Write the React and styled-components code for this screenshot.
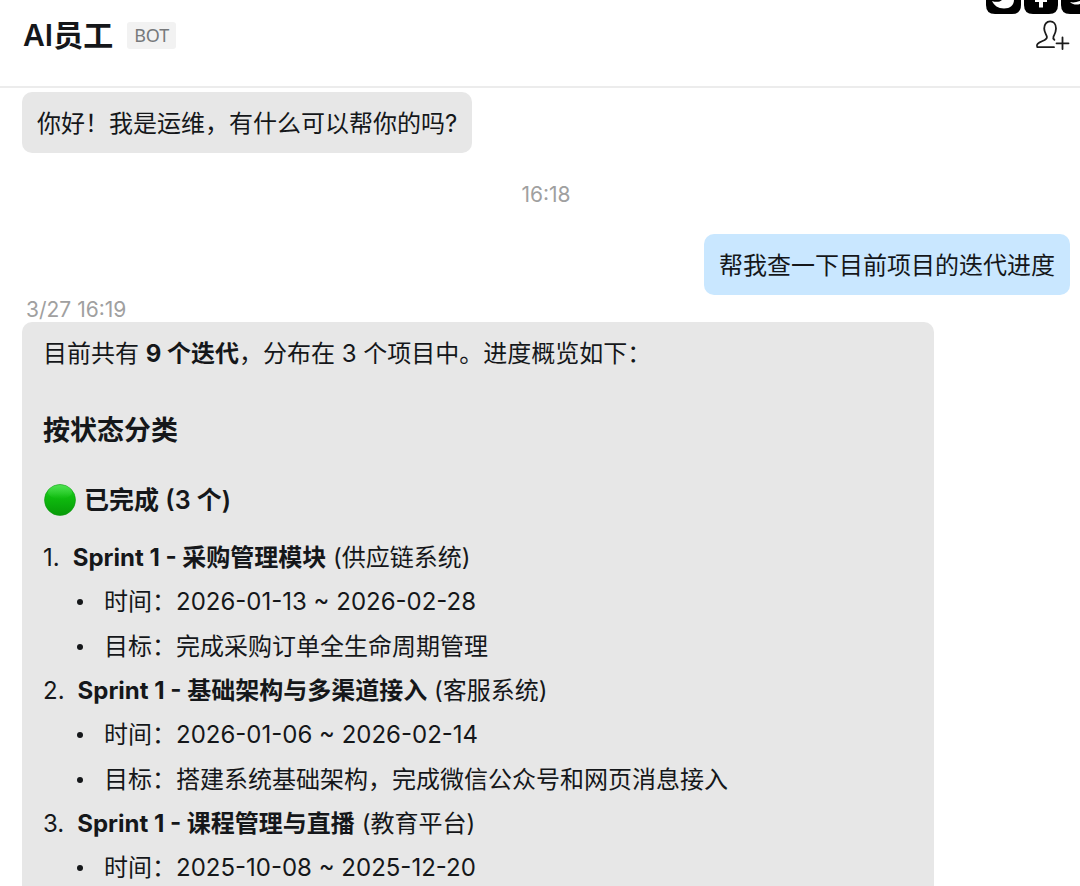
import React from 'react';
import styled, { createGlobalStyle } from 'styled-components';

const GlobalStyle = createGlobalStyle`
  *, *::before, *::after { box-sizing: border-box; }
  body {
    margin: 0;
    background: #fff;
    color: #15171a;
    font-family: Inter, "Noto Sans CJK SC", sans-serif;
    font-size: 24px;
    font-kerning: normal;
  }
`;

const Page = styled.div`
  position: relative;
  display: flex;
  flex-direction: column;
  height: 100vh;
  overflow: hidden;
`;

const Header = styled.header`
  display: flex;
  flex: none;
  align-items: center;
  justify-content: space-between;
  height: 88px;
  padding: 0 10px 16px 23px;
  border-bottom: 2px solid #ececec;
`;

const TitleGroup = styled.div`
  display: flex;
  align-items: center;
  gap: 14px;
`;

const Title = styled.h1`
  margin: 0;
  font-size: 30px;
  line-height: 40px;
  font-weight: 600;
`;

const Badge = styled.span`
  padding: 0 7px;
  border-radius: 3px;
  background: #f2f2f2;
  color: #77797b;
  font-family: "Noto Sans", sans-serif;
  font-size: 18px;
  line-height: 27px;
`;

const IconButton = styled.button`
  display: flex;
  padding: 0;
  border: 0;
  background: none;
  color: #1b1b1b;
  cursor: pointer;
`;

const CornerTools = styled.div`
  position: absolute;
  top: 0;
  right: 0;
  display: flex;
`;

const Chat = styled.main`
  display: flex;
  flex: 1;
  flex-direction: column;
  padding: 4px 10px 0 22px;
`;

const Bubble = styled.p`
  align-self: ${({ $mine }) => ($mine ? 'flex-end' : 'flex-start')};
  margin: 0;
  padding: 15px 15px 13px;
  border-radius: 10px;
  background: ${({ $mine }) => ($mine ? '#c9e7ff' : '#e7e7e7')};
  line-height: 33px;
`;

const Time = styled.time`
  align-self: ${({ $center }) => ($center ? 'center' : 'flex-start')};
  margin: ${({ $center }) => ($center ? '30px 0 27px' : '3px 0 0 4px')};
  color: #a0a0a0;
  font-size: 21px;
  line-height: 24px;
`;

const Report = styled.article`
  flex: 1 0 auto;
  width: 87%;
  padding: 10px 21px 0;
  border-radius: 10px 10px 0 0;
  background: #e7e7e7;
`;

const Summary = styled.p`
  margin: 0 0 35px;
  line-height: 44px;
`;

const SectionTitle = styled.h2`
  margin: 0 0 29px;
  font-size: 27px;
  line-height: 40px;
  font-weight: 700;
`;

const StatusTitle = styled.h3`
  display: flex;
  align-items: center;
  gap: 7px;
  margin: 0 0 16px;
  font-size: 25px;
  line-height: 40px;
  font-weight: 600;
`;

const Sprints = styled.ol`
  margin: 0;
  padding: 0;
  list-style: none;
  counter-reset: sprint;
`;

const Sprint = styled.li`
  counter-increment: sprint;
  line-height: 43px;

  &::before {
    content: counter(sprint) '.';
    margin-right: 13px;
  }
`;

const Details = styled.ul`
  margin: 0;
  padding: 0 0 0 34px;
  list-style: none;
`;

const Detail = styled.li`
  display: flex;
  align-items: center;
  gap: 21px;
  line-height: 45px;

  &::before {
    content: '';
    width: 6px;
    height: 6px;
    border-radius: 50%;
    background: currentColor;
  }
`;

const sprints = [
  {
    name: 'Sprint 1 - 采购管理模块',
    system: '供应链系统',
    details: ['时间：2026-01-13 ~ 2026-02-28', '目标：完成采购订单全生命周期管理'],
  },
  {
    name: 'Sprint 1 - 基础架构与多渠道接入',
    system: '客服系统',
    details: ['时间：2026-01-06 ~ 2026-02-14', '目标：搭建系统基础架构，完成微信公众号和网页消息接入'],
  },
  {
    name: 'Sprint 1 - 课程管理与直播',
    system: '教育平台',
    details: ['时间：2025-10-08 ~ 2025-12-20'],
  },
];

function AddMemberIcon() {
  return (
    <svg width="36" height="32" viewBox="0 0 36 32" fill="none" stroke="currentColor" strokeWidth="1.8" strokeLinecap="round" strokeLinejoin="round" aria-hidden="true">
      <path d="M20 28.200H3.200C1.800 25.500 4 24 8.500 22c3.300-1.400 4.700-2.300 4.400-4.200-.4-2.100-2.700-4.200-2.700-8.200 0-4.400 2.400-7.200 5.900-7.200s5.900 2.800 5.900 7.200c0 3.600-1.400 5.700-2.500 7.900-.7 1.600-.1 2.400.9 3.300" />
      <path d="M28.500 18.500v11.500M22.500 24.300h12" />
    </svg>
  );
}

function CornerIcons() {
  return (
    <svg width="94" height="14" viewBox="0 0 94 14" aria-hidden="true">
      <path d="M0 0h35v5q0 9-9 9H9Q0 14 0 5z" fill="#000" />
      <path d="M38 0h34v5q0 9-9 9H47q-9 0-9-9z" fill="#000" />
      <path d="M75 0h19v14H84q-9 0-9-9z" fill="#000" />
      <path d="M6 1c4 1.500 8 1 10-1h12c0 5-4 8.500-10 8.500-6 0-10-3-12-7.500z" fill="#fff" />
      <path d="M49 0h12v2h-4v5.500h-4V2h-4z" fill="#fff" />
      <path d="M84 2c4 1 6 0 10-1v3c-3 1-7 1-10-2z" fill="#fff" />
    </svg>
  );
}

function GreenCircle() {
  return (
    <svg width="34" height="34" viewBox="0 0 34 34" role="img" aria-label="已完成">
      <defs>
        <linearGradient id="green" x1="0" y1="0" x2="0" y2="1">
          <stop offset="0" stopColor="#2fd835" />
          <stop offset="0.4" stopColor="#0fbc0f" />
          <stop offset="1" stopColor="#079a08" />
        </linearGradient>
        <linearGradient id="shine" x1="0" y1="0" x2="0" y2="1">
          <stop offset="0" stopColor="#6cec6c" stopOpacity="0.5" />
          <stop offset="1" stopColor="#6cec6c" stopOpacity="0" />
        </linearGradient>
      </defs>
      <circle cx="17" cy="17" r="15.500" fill="url(#green)" stroke="#0f9a12" strokeOpacity="0.6" />
      <ellipse cx="17" cy="9" rx="12" ry="7" fill="url(#shine)" />
    </svg>
  );
}

export default function App() {
  return (
    <>
      <GlobalStyle />
      <Page>
        <Header>
          <TitleGroup>
            <Title>AI员工</Title>
            <Badge>BOT</Badge>
          </TitleGroup>
          <IconButton type="button" aria-label="添加成员">
            <AddMemberIcon />
          </IconButton>
        </Header>
        <CornerTools>
          <CornerIcons />
        </CornerTools>
        <Chat>
          <Bubble>你好！我是运维，有什么可以帮你的吗?</Bubble>
          <Time $center>16:18</Time>
          <Bubble $mine>帮我查一下目前项目的迭代进度</Bubble>
          <Time>3/27 16:19</Time>
          <Report>
            <Summary>
              目前共有 <strong>9 个迭代</strong>，分布在 3 个项目中。进度概览如下：
            </Summary>
            <SectionTitle>按状态分类</SectionTitle>
            <StatusTitle>
              <GreenCircle />
              已完成 (3 个)
            </StatusTitle>
            <Sprints>
              {sprints.map((sprint) => (
                <Sprint key={sprint.name}>
                  <strong>{sprint.name}</strong> ({sprint.system})
                  <Details>
                    {sprint.details.map((detail) => (
                      <Detail key={detail}>{detail}</Detail>
                    ))}
                  </Details>
                </Sprint>
              ))}
            </Sprints>
          </Report>
        </Chat>
      </Page>
    </>
  );
}
